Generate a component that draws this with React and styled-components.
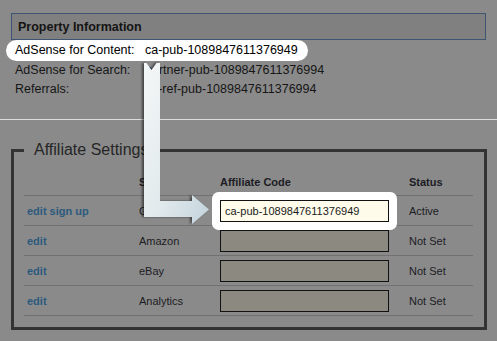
import React from 'react';
import styled, { createGlobalStyle, css } from 'styled-components';

const Global = createGlobalStyle`
  html, body { margin: 0; padding: 0; background: #8a8a8a; }
  body { font-family: "Liberation Sans", Arial, Helvetica, sans-serif; color: #1c1c1c; }
`;

const Page = styled.div`
  position: relative;
  width: 497px;
  height: 341px;
  overflow: hidden;
  background: #8a8a8a;
`;

const Top = styled.section`
  padding: 13px 11px 0 11px;
`;

const InfoHeader = styled.div`
  height: 25px;
  border: 1px solid #3e5472;
  background: #808080;
  display: flex;
  align-items: center;
  padding-left: 6px;
  font-weight: bold;
  font-size: 12.5px;
  color: #141414;
`;

const InfoList = styled.div`
  padding-left: 4px;
  font-size: 12.5px;
  color: #161616;
`;

const InfoRow = styled.div`
  display: grid;
  grid-template-columns: 130px auto;
  line-height: 19px;
  white-space: nowrap;
  ${p => p.$highlight && css`
    width: max-content;
    margin-left: -9px;
    padding: 0 10px 0 9px;
    line-height: 21px;
    background: #fff;
    border-radius: 11px;
    color: #000;
  `}
`;

const Separator = styled.hr`
  margin: 20px 0 0 0;
  border: 0;
  height: 1px;
  background: #dcdcdc;
`;

const Bottom = styled.section`
  padding: 0 10px 0 11px;
`;

const Fieldset = styled.fieldset`
  margin: 20px 0 0 0;
  padding: 0;
  border: 3px solid #333;
  min-width: 0;
`;

const Legend = styled.legend`
  margin-left: 10px;
  padding: 0 10px;
  font-size: 16px;
  line-height: 20px;
  color: #262626;
`;

const Table = styled.div`
  margin: 0 11px 11px 10px;
  font-size: 11px;
`;

const Row = styled.div`
  display: grid;
  grid-template-columns: 112px 81px 189px 1fr;
  height: 30px;
  box-sizing: border-box;
  border-bottom: 1px solid #717171;
  align-items: center;
`;

const HeadRow = styled(Row)`
  height: 36px;
  align-items: end;
  padding-bottom: 7px;
  font-weight: bold;
  color: #1a1a1a;
`;

const Cell = styled.div`
  padding-left: 3px;
  white-space: nowrap;
  color: #1c1c24;
`;

const EditLink = styled.a`
  color: #2c5a7e;
  font-weight: bold;
  text-decoration: none;
`;

const Highlight = styled.span`
  display: inline-block;
  line-height: 0;
  border-radius: 2px;
  position: relative;
  z-index: 1;
  ${p => p.$on && css`box-shadow: 0 0 0 8px #fff;`}
`;

const CodeInput = styled.input`
  width: 169px;
  height: 22px;
  box-sizing: border-box;
  border: 1px solid #111;
  margin: 0;
  padding: 0 0 0 4px;
  font: 11px "Liberation Sans", Arial, sans-serif;
  color: #1a1a1a;
  outline: none;
  background: ${p => (p.$active ? '#fffbea' : '#8c8a80')};
`;

const ArrowLayer = styled.svg`
  position: absolute;
  left: 0;
  top: 0;
  pointer-events: none;
  z-index: 5;
  filter: drop-shadow(-1.5px 0.5px 0.8px rgba(0, 0, 0, 0.5));
`;

const rows = [
  { link: 'edit sign up', site: 'Google', code: 'ca-pub-1089847611376949', status: 'Active', active: true },
  { link: 'edit', site: 'Amazon', code: '', status: 'Not Set' },
  { link: 'edit', site: 'eBay', code: '', status: 'Not Set' },
  { link: 'edit', site: 'Analytics', code: '', status: 'Not Set' },
];

export default function App() {
  return (
    <Page>
      <Global />
      <Top>
        <InfoHeader>Property Information</InfoHeader>
        <InfoList>
          <InfoRow $highlight>
            <span>AdSense for Content:</span>
            <span>ca-pub-1089847611376949</span>
          </InfoRow>
          <InfoRow>
            <span>AdSense for Search:</span>
            <span>partner-pub-1089847611376994</span>
          </InfoRow>
          <InfoRow>
            <span>Referrals:</span>
            <span>ca-ref-pub-1089847611376994</span>
          </InfoRow>
        </InfoList>
      </Top>
      <Separator />
      <Bottom>
        <Fieldset>
          <Legend>Affiliate Settings</Legend>
          <Table>
            <HeadRow>
              <Cell />
              <Cell>Site</Cell>
              <Cell>Affiliate Code</Cell>
              <Cell>Status</Cell>
            </HeadRow>
            {rows.map((r, i) => (
              <Row key={i}>
                <Cell><EditLink href="#">{r.link}</EditLink></Cell>
                <Cell>{r.site}</Cell>
                <Cell>
                  <Highlight $on={r.active}>
                    <CodeInput $active={r.active} defaultValue={r.code} readOnly />
                  </Highlight>
                </Cell>
                <Cell>{r.status}</Cell>
              </Row>
            ))}
          </Table>
        </Fieldset>
      </Bottom>
      <ArrowLayer width="497" height="341" viewBox="0 0 497 341">
        <defs>
          <linearGradient id="arrowFill" x1="0" y1="0" x2="1" y2="1">
            <stop offset="0" stopColor="#f4f7f7" />
            <stop offset="0.55" stopColor="#e2eaed" />
            <stop offset="1" stopColor="#c3d4dc" />
          </linearGradient>
        </defs>
        <polygon
          points="144,63 146.5,63 151.5,70 156.5,63 160,63 160,201 192,201 192,195 209,209.5 192,224 192,217 144,217"
          fill="url(#arrowFill)"
        />
      </ArrowLayer>
    </Page>
  );
}
